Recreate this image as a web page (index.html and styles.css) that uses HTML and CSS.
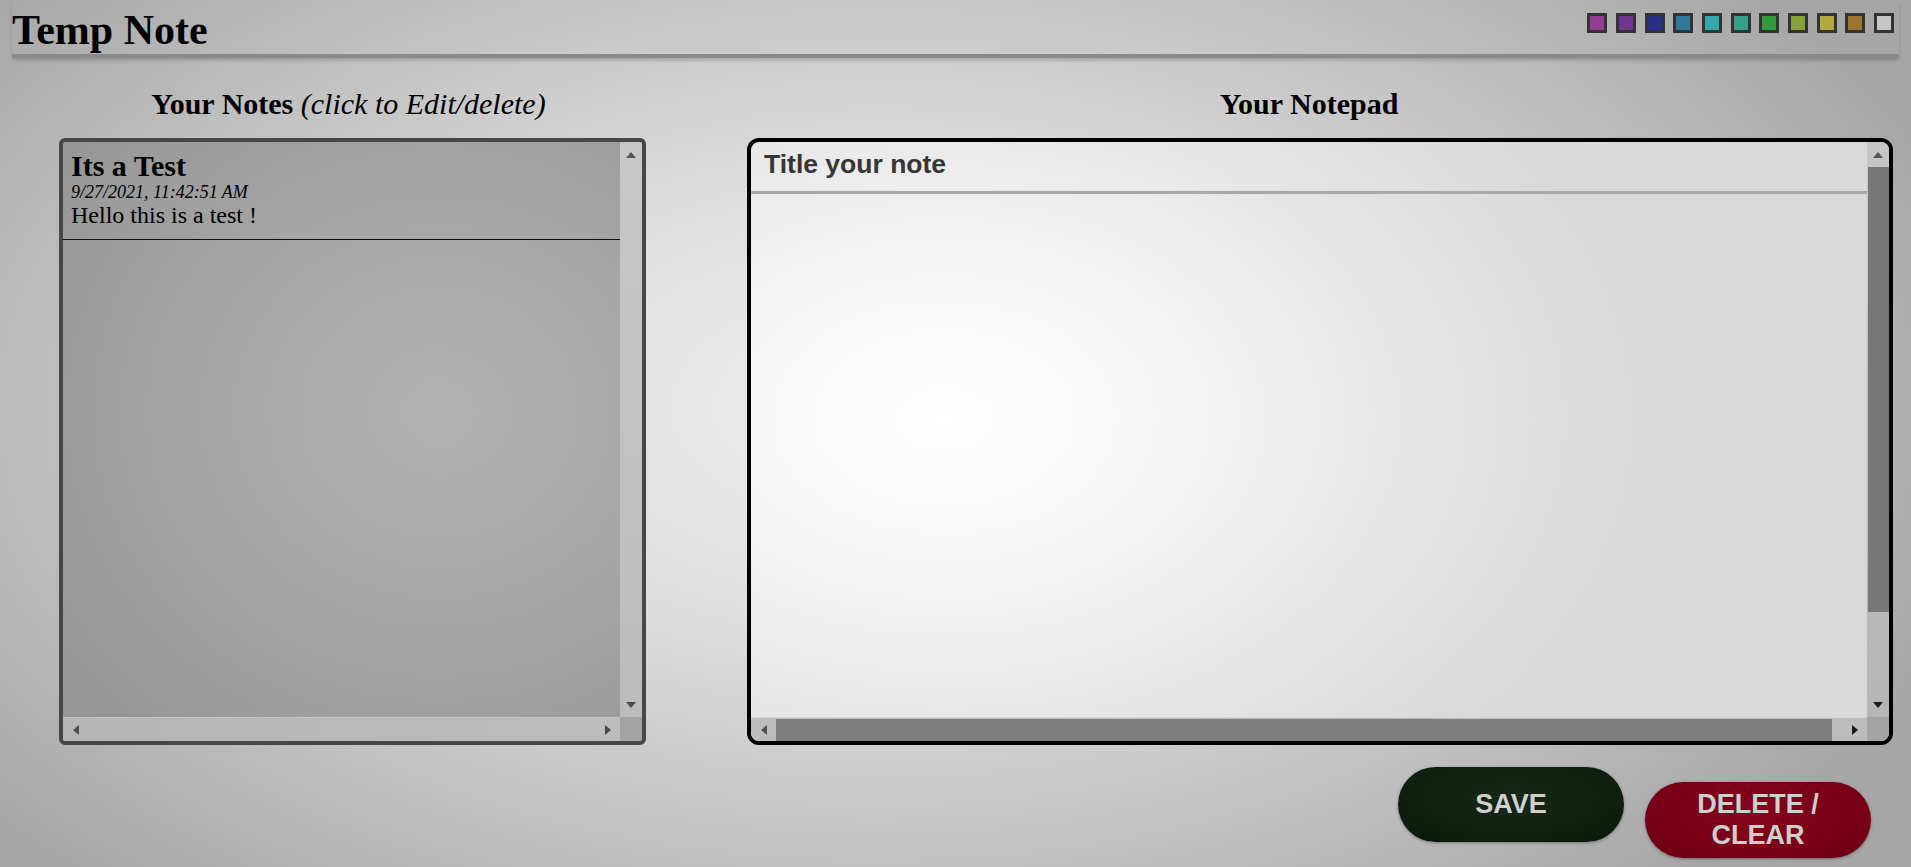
FILE: index.html
```html
<!DOCTYPE html>
<html lang="en">
<head>
<meta charset="utf-8">
<title>Temp Note</title>
<link rel="stylesheet" href="styles.css">
</head>
<body>
<header class="topbar">
  <h1 class="brand">Temp Note</h1>
  <div class="swatches">
    <span class="swatch sw-magenta"></span>
    <span class="swatch sw-purple"></span>
    <span class="swatch sw-navy"></span>
    <span class="swatch sw-steel"></span>
    <span class="swatch sw-cyan"></span>
    <span class="swatch sw-teal"></span>
    <span class="swatch sw-green"></span>
    <span class="swatch sw-olive"></span>
    <span class="swatch sw-yellow"></span>
    <span class="swatch sw-brown"></span>
    <span class="swatch sw-white"></span>
  </div>
</header>
<main class="workspace">
  <section class="col col-notes">
    <h2 class="col-title notes-heading">Your Notes <em>(click to Edit/delete)</em></h2>
    <div class="panel notes-panel">
      <div class="scroll-box">
        <div class="scroll-view">
          <article class="note">
            <h3 class="note-title">Its a Test</h3>
            <div class="note-date">9/27/2021, 11:42:51 AM</div>
            <p class="note-body">Hello this is a test !</p>
          </article>
        </div>
        <div class="vbar">
          <span class="sb-btn"><span class="arrow arrow-up"></span></span>
          <span class="sb-fill"></span>
          <span class="sb-btn"><span class="arrow arrow-down"></span></span>
        </div>
        <div class="hbar">
          <span class="sb-btn"><span class="arrow arrow-left"></span></span>
          <span class="sb-fill"></span>
          <span class="sb-btn"><span class="arrow arrow-right"></span></span>
        </div>
        <div class="corner"></div>
      </div>
    </div>
  </section>
  <section class="col col-pad">
    <h2 class="col-title pad-heading">Your Notepad</h2>
    <div class="panel pad-panel">
      <div class="scroll-box">
        <div class="scroll-view pad-view">
          <div class="pad-title">Title your note</div>
          <div class="pad-body"></div>
        </div>
        <div class="vbar">
          <span class="sb-btn"><span class="arrow arrow-up"></span></span>
          <span class="thumb thumb-v"></span>
          <span class="sb-fill"></span>
          <span class="sb-btn"><span class="arrow arrow-down active"></span></span>
        </div>
        <div class="hbar">
          <span class="sb-btn"><span class="arrow arrow-left"></span></span>
          <span class="thumb thumb-h"></span>
          <span class="sb-fill"></span>
          <span class="sb-btn"><span class="arrow arrow-right active"></span></span>
        </div>
        <div class="corner"></div>
      </div>
    </div>
    <div class="actions">
      <button class="btn btn-save">SAVE</button>
      <button class="btn btn-delete">DELETE / CLEAR</button>
    </div>
  </section>
</main>
</body>
</html>
```

FILE: styles.css
```css
html, body {
  margin: 0;
  padding: 0;
}

body {
  width: 1911px;
  height: 867px;
  overflow: hidden;
  font-family: "Liberation Serif", "Times New Roman", serif;
  color: #000;
  background: radial-gradient(ellipse 60% 76% at 46% 47%, #efefef 0%, #dfdfdf 33%, #c4c4c4 66%, #a6a6a6 100%);
}

/* ---------- header ---------- */
.topbar {
  display: flex;
  justify-content: space-between;
  align-items: flex-start;
  margin: 0 12px 0 12px;
  padding-top: 7px;
  border-bottom: 4px solid #8a8a8a;
  box-shadow: 0 3px 4px -1px rgba(0, 0, 0, 0.22);
}

.brand {
  margin: 0;
  font-size: 42px;
  line-height: 47px;
  font-weight: bold;
}

.swatches {
  display: flex;
  gap: 8.7px;
  margin-top: 6px;
  margin-right: 5px;
}

.swatch {
  width: 14px;
  height: 14px;
  border: 3px solid #333;
  display: block;
}

.sw-magenta { background: #963a98; }
.sw-purple  { background: #71348f; }
.sw-navy    { background: #2a2f86; }
.sw-steel   { background: #2f7a9c; }
.sw-cyan    { background: #33aaae; }
.sw-teal    { background: #33a088; }
.sw-green   { background: #329a3a; }
.sw-olive   { background: #86a23c; }
.sw-yellow  { background: #b2aa3c; }
.sw-brown   { background: #9c7630; }
.sw-white   { background: #c6c6c6; }

/* ---------- layout ---------- */
.workspace {
  display: flex;
  gap: 101px;
  padding-left: 59px;
  margin-top: 28px;
}

.col {
  display: flex;
  flex-direction: column;
}

.col-notes { width: 587px; }
.col-pad   { width: 1146px; }

.col-title {
  margin: 1px 0 17px;
  font-size: 30px;
  line-height: 34px;
  font-weight: bold;
  text-align: center;
}

.col-title em {
  font-weight: normal;
  font-style: italic;
}

.notes-heading {
  padding-right: 8px;
}

.pad-heading {
  padding-right: 22px;
}

/* ---------- panels ---------- */
.panel {
  height: 599px;
  overflow: hidden;
}

.notes-panel {
  border: 4px solid #474747;
  border-radius: 6px;
  background: radial-gradient(ellipse 80% 70% at 65% 45%, #b2b2b2 0%, #a6a6a6 50%, #979797 100%);
}

.pad-panel {
  border: 4px solid #000;
  border-radius: 12px;
  background: radial-gradient(ellipse 62% 80% at 17% 46%, #ffffff 0%, #f6f6f6 30%, #e6e6e6 65%, #d9d9d9 100%);
}

.scroll-box {
  display: grid;
  grid-template-columns: 1fr 22px;
  grid-template-rows: 1fr 24px;
  height: 100%;
}

.scroll-view {
  overflow: hidden;
}

/* ---------- note list ---------- */
.note {
  padding: 8px 8px 10px;
  border-bottom: 1px solid #111;
}

.note-title {
  margin: 0;
  font-size: 30px;
  line-height: 32px;
  font-weight: bold;
}

.note-date {
  font-size: 18px;
  line-height: 20px;
  font-style: italic;
}

.note-body {
  margin: 0;
  font-size: 24px;
  line-height: 27px;
}

/* ---------- notepad ---------- */
.pad-view {
  display: flex;
  flex-direction: column;
}

.pad-title {
  padding: 7px 13px 12px;
  font-family: "Liberation Sans", Arial, sans-serif;
  font-size: 26.5px;
  line-height: 30px;
  font-weight: bold;
  color: #363636;
  border-bottom: 3px solid #a8a8a8;
}

.pad-body {
  flex: 1;
}

/* ---------- scrollbars ---------- */
.vbar {
  display: flex;
  flex-direction: column;
  background: linear-gradient(#c6c6c6, #b6b6b6);
}

.hbar {
  display: flex;
  border-top: 1px solid #d6d6d6;
  background: #bdbdbd;
}

.notes-panel .vbar { background: linear-gradient(#c8c8c8, #bcbcbc); }
.notes-panel .hbar { background: linear-gradient(90deg, #b6b6b6, #bcbcbc); border-top-color: #c4c4c4; }

.corner {
  background: #a4a4a4;
}

.sb-btn {
  flex: 0 0 25px;
  display: flex;
  align-items: center;
  justify-content: center;
}

.vbar .sb-btn { height: 25px; }
.hbar .sb-btn { width: 25px; }

.sb-fill { flex: 1; }

.thumb { background: #787878; }

.thumb-v {
  height: 445px;
  margin: 0 0 0 1px;
}

.thumb-h {
  width: 1056px;
  margin: 1px 0 0;
  background: #7e7e7e;
}

.arrow {
  width: 0;
  height: 0;
  border-style: solid;
  border-color: transparent;
}

.arrow-up {
  border-width: 0 5px 6px 5px;
  border-bottom-color: #555;
}

.arrow-down {
  border-width: 6px 5px 0 5px;
  border-top-color: #4a4a4a;
}

.arrow-left {
  border-width: 5px 6px 5px 0;
  border-right-color: #4e4e4e;
}

.arrow-right {
  border-width: 5px 0 5px 6px;
  border-left-color: #4a4a4a;
}

.arrow-down.active  { border-top-color: #1c1c1c; }
.arrow-right.active { border-left-color: #1c1c1c; }

/* ---------- buttons ---------- */
.actions {
  display: flex;
  justify-content: flex-end;
  align-items: baseline;
  gap: 21px;
  margin-top: 22px;
  padding-right: 22px;
}

.btn {
  width: 226px;
  border: none;
  border-radius: 38px;
  padding: 0 20px;
  font-family: "Liberation Sans", Arial, sans-serif;
  font-size: 27px;
  line-height: 31px;
  font-weight: bold;
  color: #cfcfcf;
  cursor: pointer;
}

.btn-save {
  height: 75px;
  background: radial-gradient(ellipse at 50% 40%, #172817 0%, #102010 60%, #0a170b 100%);
  box-shadow: 0 1px 3px rgba(0, 0, 0, 0.35);
}

.btn-delete {
  height: 76px;
  background: radial-gradient(ellipse at 50% 40%, #84041c 0%, #7a0017 60%, #680012 100%);
  box-shadow: 0 1px 3px rgba(0, 0, 0, 0.35);
}
```
